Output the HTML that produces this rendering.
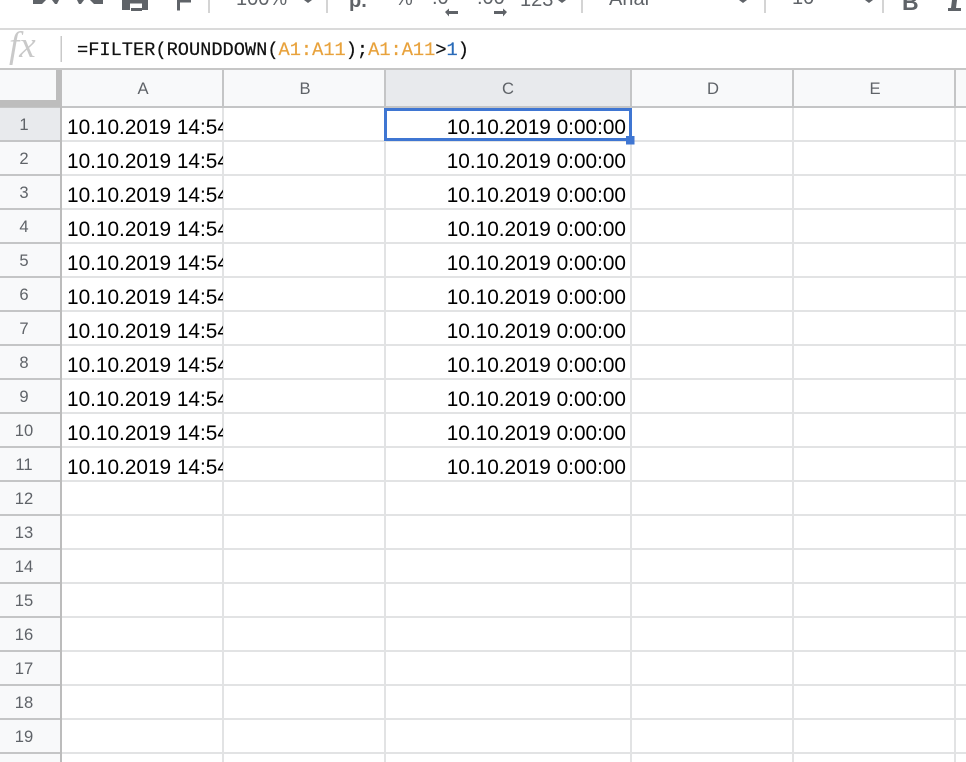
<!DOCTYPE html>
<html><head><meta charset="utf-8"><style>
html,body{margin:0;padding:0;background:#fff;overflow:hidden}
svg{display:block}
text{font-family:"Liberation Sans",sans-serif}
.c text{font-size:20.8px;fill:#000}
.r text{font-size:16.6px;fill:#5f6368;text-anchor:middle}
.t text{font-size:20px;fill:#5f6368}
</style></head><body>
<svg width="966" height="762" viewBox="0 0 966 762" xmlns="http://www.w3.org/2000/svg">
<defs><clipPath id="a"><rect x="62" y="108" width="161" height="374"/></clipPath></defs>
<rect width="966" height="762" fill="#fff"/>
<!-- toolbar -->
<g fill="#5f6368">
<path d="M33 0h13l-4 4h-9zM52 0h7l-2 4h-2z"/>
<path d="M103 0h-13l4 4h9zM84 0h-7l2 4h2z"/>
<path d="M122 0h26v7h-6v-3.500h-12v3.500h-8z"/>
<path d="M122 7h8v3h-8zM142 7h6v3h-6zM131 8h11v3h-11z"/>
<path d="M177 0h14v2.500h-11v8h-3z"/>
<path d="M304 0h8l-4 3zM558 0h8l-4 3zM739 0h8l-4 3zM865 0h8l-4 3z"/>
<path d="M445 12l4-3.500v2.500h9v3h-9v2.500l-4-4.500zM507 12l-4-3.500v2.500h-9v3h9v2.500l4-4.500z"/>
<path d="M948 8h3l1-8h5l-1 8h5v3h-13z"/>
</g>
<text x="902" y="10" style="font-size:23px;font-weight:bold" fill="#5f6368">B</text>
<g fill="#d4d4d4"><rect x="208" y="0" width="2" height="13"/><rect x="326" y="0" width="2" height="13"/><rect x="581" y="0" width="2" height="13"/><rect x="764" y="0" width="2" height="13"/><rect x="882" y="0" width="2" height="13"/></g>
<g class="t">
<text x="236" y="5">100%</text>
<text x="349" y="7" font-weight="bold" style="font-family:'Liberation Sans','DejaVu Sans',sans-serif">р.</text>
<text x="395" y="5" font-size="18">%</text>
<text x="432" y="4">.0</text>
<text x="477" y="4">.00</text>
<text x="520" y="6">123</text>
<text x="609" y="5">Arial</text>
<text x="792" y="4">10</text>
</g>
<rect x="0" y="28" width="966" height="2" fill="#dadada"/>
<!-- formula bar -->
<text x="9" y="57" style="font-family:'Liberation Serif',serif;font-style:italic;font-size:37px" fill="#c9c9c9">fx</text>
<rect x="60.500" y="36" width="1.500" height="26" fill="#c9c9c9"/>
<text x="77" y="55" xml:space="preserve" style="font-family:'Liberation Mono',monospace;font-size:18.67px" fill="#111" stroke="#111" stroke-width="0.2">=FILTER(ROUNDDOWN(<tspan fill="#e8a23c" stroke="#e8a23c">A1:A11</tspan>);<tspan fill="#e8a23c" stroke="#e8a23c">A1:A11</tspan>&gt;<tspan fill="#2a6bb8" stroke="#2a6bb8">1</tspan>)</text>
<!-- headers -->
<rect x="0" y="70" width="966" height="37" fill="#f8f9fa"/>
<rect x="386" y="70" width="245" height="37" fill="#e8eaed"/>
<rect x="0" y="108" width="60" height="654" fill="#f8f9fa"/>
<rect x="0" y="108" width="60" height="33" fill="#e8eaed"/>
<rect x="0" y="68" width="966" height="2" fill="#c6c6c6"/>
<!-- grid lines -->
<g fill="#e2e3e4">
<rect x="62" y="140" width="904" height="2"/><rect x="62" y="174" width="904" height="2"/><rect x="62" y="208" width="904" height="2"/><rect x="62" y="242" width="904" height="2"/><rect x="62" y="276" width="904" height="2"/><rect x="62" y="310" width="904" height="2"/><rect x="62" y="344" width="904" height="2"/><rect x="62" y="378" width="904" height="2"/><rect x="62" y="412" width="904" height="2"/><rect x="62" y="446" width="904" height="2"/><rect x="62" y="480" width="904" height="2"/><rect x="62" y="514" width="904" height="2"/><rect x="62" y="548" width="904" height="2"/><rect x="62" y="582" width="904" height="2"/><rect x="62" y="616" width="904" height="2"/><rect x="62" y="650" width="904" height="2"/><rect x="62" y="684" width="904" height="2"/><rect x="62" y="718" width="904" height="2"/><rect x="62" y="752" width="904" height="2"/>
<rect x="222" y="108" width="2" height="654"/><rect x="384" y="108" width="2" height="654"/><rect x="630" y="108" width="2" height="654"/><rect x="792" y="108" width="2" height="654"/><rect x="954" y="108" width="2" height="654"/>
</g>
<g fill="#c4c5c6">
<rect x="0" y="140" width="60" height="2"/><rect x="0" y="174" width="60" height="2"/><rect x="0" y="208" width="60" height="2"/><rect x="0" y="242" width="60" height="2"/><rect x="0" y="276" width="60" height="2"/><rect x="0" y="310" width="60" height="2"/><rect x="0" y="344" width="60" height="2"/><rect x="0" y="378" width="60" height="2"/><rect x="0" y="412" width="60" height="2"/><rect x="0" y="446" width="60" height="2"/><rect x="0" y="480" width="60" height="2"/><rect x="0" y="514" width="60" height="2"/><rect x="0" y="548" width="60" height="2"/><rect x="0" y="582" width="60" height="2"/><rect x="0" y="616" width="60" height="2"/><rect x="0" y="650" width="60" height="2"/><rect x="0" y="684" width="60" height="2"/><rect x="0" y="718" width="60" height="2"/><rect x="0" y="752" width="60" height="2"/>
<rect x="222" y="70" width="2" height="37"/><rect x="384" y="70" width="2" height="37"/><rect x="630" y="70" width="2" height="37"/><rect x="792" y="70" width="2" height="37"/><rect x="954" y="70" width="2" height="37"/>
<rect x="0" y="106" width="966" height="2"/>
</g>
<rect x="60" y="70" width="2" height="692" fill="#bcbcbc"/>
<rect x="0" y="100" width="62" height="7" fill="#bdbdbd"/>
<rect x="56" y="70" width="6" height="37" fill="#bdbdbd"/>
<!-- labels -->
<g class="r">
<text x="143" y="94">A</text><text x="305" y="94">B</text><text x="508" y="94">C</text><text x="713" y="94">D</text><text x="875" y="94">E</text>
<text x="24" y="130">1</text><text x="24" y="164">2</text><text x="24" y="198">3</text><text x="24" y="232">4</text><text x="24" y="266">5</text><text x="24" y="300">6</text><text x="24" y="334">7</text><text x="24" y="368">8</text><text x="24" y="402">9</text><text x="24" y="436">10</text><text x="24" y="470">11</text><text x="24" y="504">12</text><text x="24" y="538">13</text><text x="24" y="572">14</text><text x="24" y="606">15</text><text x="24" y="640">16</text><text x="24" y="674">17</text><text x="24" y="708">18</text><text x="24" y="742">19</text>
</g>
<!-- cells -->
<g class="c" clip-path="url(#a)">
<text x="67" y="134">10.10.2019 14:54:00</text><text x="67" y="168">10.10.2019 14:54:00</text><text x="67" y="202">10.10.2019 14:54:00</text><text x="67" y="236">10.10.2019 14:54:00</text><text x="67" y="270">10.10.2019 14:54:00</text><text x="67" y="304">10.10.2019 14:54:00</text><text x="67" y="338">10.10.2019 14:54:00</text><text x="67" y="372">10.10.2019 14:54:00</text><text x="67" y="406">10.10.2019 14:54:00</text><text x="67" y="440">10.10.2019 14:54:00</text><text x="67" y="474">10.10.2019 14:54:00</text>
</g>
<g class="c" text-anchor="end">
<text x="626" y="134">10.10.2019 0:00:00</text><text x="626" y="168">10.10.2019 0:00:00</text><text x="626" y="202">10.10.2019 0:00:00</text><text x="626" y="236">10.10.2019 0:00:00</text><text x="626" y="270">10.10.2019 0:00:00</text><text x="626" y="304">10.10.2019 0:00:00</text><text x="626" y="338">10.10.2019 0:00:00</text><text x="626" y="372">10.10.2019 0:00:00</text><text x="626" y="406">10.10.2019 0:00:00</text><text x="626" y="440">10.10.2019 0:00:00</text><text x="626" y="474">10.10.2019 0:00:00</text>
</g>
<!-- selection -->
<rect x="385.500" y="109.500" width="245" height="30" fill="none" stroke="#3f76d2" stroke-width="3"/>
<rect x="626" y="136" width="8.500" height="8.500" fill="#3f76d2"/>
</svg>
</body></html>
